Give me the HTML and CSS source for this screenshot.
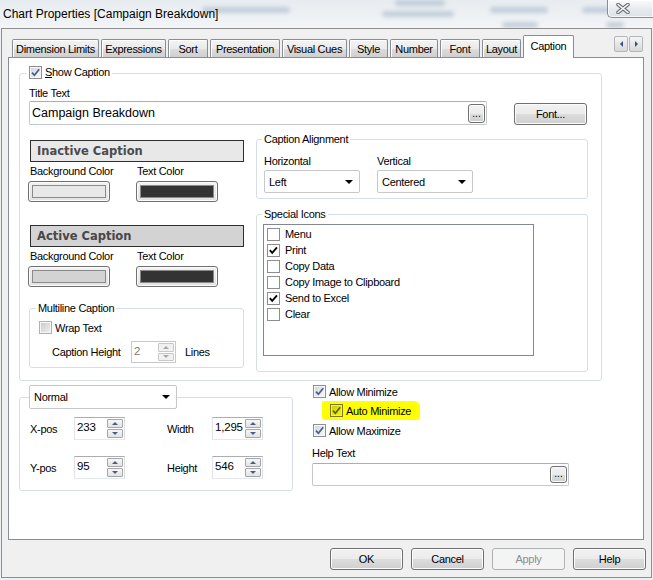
FILE: index.html
```html
<!DOCTYPE html>
<html lang="en">
<head>
<meta charset="utf-8">
<title>Chart Properties</title>
<link rel="stylesheet" href="styles.css">
</head>
<body>
<div class="window">
  <div class="titlebar">
    <div class="backdrop" aria-hidden="true">
      <i class="bl b1"></i>
      <i class="bl b2"></i>
      <i class="bl b3"></i>
      <i class="bl b4"></i>
      <i class="bl b5"></i>
      <i class="bl b6"></i>
      <i class="bl b7"></i>
    </div>
    <div class="title">Chart Properties [Campaign Breakdown]</div>
    <div class="close">
      <svg width="14" height="11" viewBox="0 0 14 11"><path d="M2 1.5L12 9.5M12 1.5L2 9.5" stroke="#6b6f75" stroke-width="3.6" stroke-linecap="round"/><path d="M2 1.5L12 9.5M12 1.5L2 9.5" stroke="#fbfbfb" stroke-width="1.6" stroke-linecap="round"/></svg>
    </div>
  </div>

  <div class="frame">
    <div class="tabs">
      <div class="tab"><span>Dimension Limits</span></div>
      <div class="tab"><span>Expressions</span></div>
      <div class="tab"><span>Sort</span></div>
      <div class="tab"><span>Presentation</span></div>
      <div class="tab"><span>Visual Cues</span></div>
      <div class="tab"><span>Style</span></div>
      <div class="tab"><span>Number</span></div>
      <div class="tab"><span>Font</span></div>
      <div class="tab"><span>Layout</span></div>
      <div class="tab active"><span>Caption</span></div>
      <div class="tabscroll">
        <div class="tsb"><i class="tri-left"></i></div>
        <div class="tsb"><i class="tri-right"></i></div>
      </div>
    </div>

    <div class="panel">
      <fieldset class="capgroup">
        <legend class="lg-check"><span class="lg-inner"><span class="cb"><svg width="11" height="11" viewBox="0 0 11 11"><path d="M2 5.6l2.4 2.7L9.2 2.2" fill="none" stroke="#4a5c8e" stroke-width="1.7"/></svg></span><span><u>S</u>how Caption</span></span></legend>
        <div class="cap-body">
          <div class="label title-label">Title Text</div>
          <div class="title-row">
            <div class="textbox big"><span>Campaign Breakdown</span><span class="dots">...</span></div>
            <div class="btn fontbtn">Font...</div>
          </div>

          <div class="columns">
            <div class="leftcol">
              <div class="capbar inactive">Inactive Caption</div>
              <div class="swatch-grid">
                <div class="label sl">Background Color</div>
                <div class="label sl2">Text Color</div>
                <div class="swatch"><div class="sw-fill light"></div></div>
                <div class="swatch"><div class="sw-fill dark"></div></div>
              </div>

              <div class="capbar active">Active Caption</div>
              <div class="swatch-grid">
                <div class="label sl">Background Color</div>
                <div class="label sl2">Text Color</div>
                <div class="swatch"><div class="sw-fill mid"></div></div>
                <div class="swatch"><div class="sw-fill dark"></div></div>
              </div>

              <fieldset class="mlgroup">
                <legend class="lg-text">Multiline Caption</legend>
                <div class="ml-body">
                  <div class="chk-line"><span class="cb disabled"></span><span>Wrap Text</span></div>
                  <div class="height-row">
                    <span class="hlabel">Caption Height</span>
                    <div class="spin disabled small"><span class="val">2</span><span class="spinbtns"><span class="sb up"></span><span class="sb down"></span></span></div>
                    <span class="lines">Lines</span>
                  </div>
                </div>
              </fieldset>
            </div>

            <div class="rightcol">
              <fieldset class="cagroup">
                <legend class="lg-text">Caption Alignment</legend>
                <div class="ca-body">
                  <div>
                    <div class="label">Horizontal</div>
                    <div class="select"><span>Left</span><i class="arrow"></i></div>
                  </div>
                  <div>
                    <div class="label">Vertical</div>
                    <div class="select"><span>Centered</span><i class="arrow"></i></div>
                  </div>
                </div>
              </fieldset>

              <fieldset class="sigroup">
                <legend class="lg-text">Special Icons</legend>
                <div class="si-body">
                  <div class="listbox">
                    <div class="item"><span class="cbf"></span><span>Menu</span></div>
                    <div class="item"><span class="cbf"><svg width="11" height="11" viewBox="0 0 11 11"><path d="M1.8 5.2l2.4 2.6L9 2.4" fill="none" stroke="#000" stroke-width="1.8"/></svg></span><span>Print</span></div>
                    <div class="item"><span class="cbf"></span><span>Copy Data</span></div>
                    <div class="item"><span class="cbf"></span><span>Copy Image to Clipboard</span></div>
                    <div class="item"><span class="cbf"><svg width="11" height="11" viewBox="0 0 11 11"><path d="M1.8 5.2l2.4 2.6L9 2.4" fill="none" stroke="#000" stroke-width="1.8"/></svg></span><span>Send to Excel</span></div>
                    <div class="item"><span class="cbf"></span><span>Clear</span></div>
                  </div>
                </div>
              </fieldset>
            </div>
          </div>
        </div>
      </fieldset>

      <div class="bottom">
        <fieldset class="posgroup">
          <legend class="lg-select"><div class="select wide"><span>Normal</span><i class="arrow"></i></div></legend>
          <div class="pos-body">
            <span>X-pos</span>
            <div class="spin"><span class="val">233</span><span class="spinbtns"><span class="sb up"></span><span class="sb down"></span></span></div>
            <span></span>
            <span>Width</span>
            <div class="spin"><span class="val">1,295</span><span class="spinbtns"><span class="sb up"></span><span class="sb down"></span></span></div>
            <span>Y-pos</span>
            <div class="spin"><span class="val">95</span><span class="spinbtns"><span class="sb up"></span><span class="sb down"></span></span></div>
            <span></span>
            <span>Height</span>
            <div class="spin"><span class="val">546</span><span class="spinbtns"><span class="sb up"></span><span class="sb down"></span></span></div>
          </div>
        </fieldset>

        <div class="optcol">
          <div class="chkrow"><span class="cb"><svg width="11" height="11" viewBox="0 0 11 11"><path d="M2 5.6l2.4 2.7L9.2 2.2" fill="none" stroke="#4a5c8e" stroke-width="1.7"/></svg></span><span>Allow Minimize</span></div>
          <div class="chkrow"><span class="hl"><span class="cb hlcb"><svg width="11" height="11" viewBox="0 0 11 11"><path d="M2 5.6l2.4 2.7L9.2 2.2" fill="none" stroke="#5b5b1c" stroke-width="1.7"/></svg></span><span>Auto Minimize</span></span></div>
          <div class="chkrow third"><span class="cb"><svg width="11" height="11" viewBox="0 0 11 11"><path d="M2 5.6l2.4 2.7L9.2 2.2" fill="none" stroke="#4a5c8e" stroke-width="1.7"/></svg></span><span>Allow Maximize</span></div>
          <div class="label help-label">Help Text</div>
          <div class="textbox help"><span></span><span class="dots">...</span></div>
        </div>
      </div>
    </div>

    <div class="buttons">
      <div class="btn">OK</div>
      <div class="btn">Cancel</div>
      <div class="btn disabled">Apply</div>
      <div class="btn">Help</div>
    </div>
  </div>
</div>
</body>
</html>
```

FILE: styles.css
```css
* { box-sizing: border-box; }
html, body { margin: 0; padding: 0; }
body {
  width: 653px;
  height: 580px;
  overflow: hidden;
  background: #eef1f4;
  font-family: "Liberation Sans", Arial, sans-serif;
  font-size: 11px;
  letter-spacing: -0.3px;
  color: #000;
}
.window { width: 653px; height: 580px; }

/* ---------- title bar ---------- */
.titlebar {
  position: relative;
  height: 28px;
  display: flex;
  align-items: flex-start;
  background: linear-gradient(#e7ecf0, #f3f5f7);
}
.backdrop { position: absolute; inset: 0; overflow: hidden; }
.bl {
  position: absolute;
  height: 6px;
  border-radius: 3px;
  background: #9fb1c6;
  filter: blur(2.2px);
  opacity: 0.55;
}
.b1 { left: 202px; top: 7px; width: 88px; }
.b2 { left: 395px; top: 0px; width: 50px; }
.b3 { left: 382px; top: 11px; width: 72px; }
.b4 { left: 490px; top: 7px; width: 58px; }
.b5 { left: 582px; top: 7px; width: 40px; }
.b6 { left: 502px; top: 22px; width: 36px; }
.b7 { left: 606px; top: 22px; width: 18px; }
.title {
  position: relative;
  margin: 7px 0 0 3px;
  font-size: 12px;
  letter-spacing: 0;
  line-height: 14px;
  color: #000;
  white-space: nowrap;
}
.close {
  position: relative;
  margin-left: auto;
  width: 46px;
  height: 18px;
  border: 1px solid #858d98;
  border-top: none;
  border-right: none;
  border-radius: 0 0 0 5px;
  background: linear-gradient(#fafbfc, #e6eaef 55%, #dde2e8);
  box-shadow: inset 0 0 0 1px rgba(255,255,255,0.7);
  display: flex;
  align-items: center;
  padding-left: 8px;
}

/* ---------- frame ---------- */
.frame {
  margin-left: 1px;
  width: 651px;
  height: 550px;
  border: 1px solid #8d8e8f;
  background: #f0f0f0;
}

/* ---------- tabs ---------- */
.tabs {
  display: flex;
  align-items: flex-end;
  height: 22px;
  margin: 6px 0 0 10px;
}
.tab {
  height: 18px;
  margin-right: 2px;
  border: 1px solid #898c95;
  border-bottom: none;
  border-radius: 2px 2px 0 0;
  background: linear-gradient(#f3f3f3, #ebebeb 50%, #dddddd 51%, #cfcfcf);
  box-shadow: inset 1px 1px 0 #fff;
  display: flex;
  align-items: center;
  justify-content: center;
  white-space: nowrap;
}
.tab:nth-child(1) { width: 87px; }
.tab:nth-child(2) { width: 65px; }
.tab:nth-child(3) { width: 40px; }
.tab:nth-child(4) { width: 70px; }
.tab:nth-child(5) { width: 65px; }
.tab:nth-child(6) { width: 39px; }
.tab:nth-child(7) { width: 48px; }
.tab:nth-child(8) { width: 40px; }
.tab:nth-child(9) { width: 39px; }
.tab.active {
  width: 51px;
  height: 23px;
  margin-bottom: -1px;
  background: #fff;
  box-shadow: none;
  position: relative;
  z-index: 1;
  align-items: flex-start;
  padding-top: 4px;
}
.tabscroll {
  align-self: flex-start;
  margin: 1px 0 0 auto;
  margin-right: 8px;
  display: flex;
  gap: 1px;
}
.tsb {
  width: 14px;
  height: 16px;
  border: 1px solid #b3b6ba;
  border-radius: 2px;
  background: linear-gradient(#f6f6f6, #e6e6e6 50%, #d9d9d9);
  display: flex;
  align-items: center;
  justify-content: center;
}
.tri-left { width: 0; height: 0; border-top: 3px solid transparent; border-bottom: 3px solid transparent; border-right: 3px solid #3c4f84; }
.tri-right { width: 0; height: 0; border-top: 3px solid transparent; border-bottom: 3px solid transparent; border-left: 3px solid #3c4f84; }

/* ---------- panel ---------- */
.panel {
  margin-left: 6px;
  width: 636px;
  height: 483px;
  border: 1px solid #898c95;
  background: #fff;
  position: relative;
}

fieldset {
  margin: 0;
  padding: 0;
  border: 1px solid #d5dfe5;
  border-radius: 3px;
  min-width: 0;
}
legend { padding: 0 2px; line-height: 13px; }
.lg-inner { display: inline-flex; align-items: center; gap: 3px; }

.label { line-height: 13px; white-space: nowrap; }

.capgroup { margin: 8px 0 0 10px; width: 583px; }
.lg-check { margin-left: 7px; }
.cap-body { padding: 0 9px 8px 9px; }
.title-label { margin-top: 6px; }
.title-row { display: flex; align-items: flex-start; margin-top: 1px; }

.textbox {
  height: 24px;
  border: 1px solid #c4c7cc;
  border-top-color: #abadb3;
  border-radius: 2px;
  background: #fff;
  display: flex;
  align-items: center;
  justify-content: space-between;
  padding: 0 1px 0 2px;
}
.textbox.big { width: 458px; font-size: 12.5px; letter-spacing: 0; }
.dots {
  width: 17px;
  height: 19px;
  border: 1px solid #707070;
  border-radius: 3px;
  background: linear-gradient(#f2f2f2, #ebebeb 50%, #dddddd 51%, #cfcfcf);
  box-shadow: inset 0 0 0 1px #fbfbfb;
  font-size: 10px;
  letter-spacing: 0;
  line-height: 10px;
  display: flex;
  align-items: flex-end;
  justify-content: center;
  padding-bottom: 3px;
}

.btn {
  width: 73px;
  height: 22px;
  border: 1px solid #707070;
  border-radius: 3px;
  background: linear-gradient(#f2f2f2, #ebebeb 50%, #dddddd 51%, #cfcfcf);
  box-shadow: inset 0 0 0 1px #fcfcfc;
  display: flex;
  align-items: center;
  justify-content: center;
  white-space: nowrap;
}
.btn.disabled {
  border-color: #adb2b5;
  background: #f4f4f4;
  box-shadow: none;
  color: #8d8d8d;
}
.fontbtn { margin: 2px 0 0 27px; }

.columns { display: flex; align-items: flex-start; margin-top: 8px; }
.leftcol { width: 215px; padding-top: 7px; }
.rightcol { width: 332px; margin-left: 12px; }

.capbar {
  margin-left: 1px;
  width: 214px;
  height: 22px;
  border: 1px solid #2e2e2e;
  padding-left: 6px;
  display: flex;
  align-items: center;
  font-family: "DejaVu Sans", sans-serif;
  font-weight: bold;
  font-size: 11.5px;
  letter-spacing: 0;
  color: #4b4b4b;
}
.capbar.inactive { background: #e8e8e8; }
.capbar.active { background: #d3d3d3; margin-top: 23px; color: #474747; }

.swatch-grid {
  display: grid;
  grid-template-columns: 108px 82px;
  row-gap: 3px;
  margin: 3px 0 0 -1px;
}
.sl { padding-left: 2px; }
.sl2 { padding-left: 1px; }
.swatch {
  width: 82px;
  height: 21px;
  border: 1px solid #707070;
  border-radius: 3px;
  background: linear-gradient(#f2f2f2, #e2e2e2);
  box-shadow: inset 0 0 0 1px #fbfbfb;
  padding: 3px 3px;
}
.sw-fill { width: 100%; height: 100%; border: 1px solid #8a8a8a; }
.sw-fill.light { background: #e8e8e8; }
.sw-fill.mid { background: #d3d3d3; }
.sw-fill.dark { background: #333333; }

.mlgroup { margin-top: 15px; width: 215px; }
.lg-text { margin-left: 6px; white-space: nowrap; }
.ml-body { padding: 6px 0 4px 9px; }
.chk-line { display: flex; align-items: center; gap: 3px; height: 13px; }
.height-row { display: flex; align-items: center; margin-top: 7px; }
.hlabel { margin-left: 13px; width: 79px; }
.lines { margin-left: 9px; }

/* checkboxes */
.cb {
  width: 13px;
  height: 13px;
  flex: none;
  border: 1px solid #8e8f8f;
  background: linear-gradient(135deg, #cfd3d8, #f4f4f5 80%);
  box-shadow: inset 0 0 0 1px #f6f6f6;
  display: flex;
  align-items: center;
  justify-content: center;
}
.cb.disabled {
  border-color: #b1b1b1;
  background: linear-gradient(135deg, #c7c7c7, #ececec 85%);
}
.cb.hlcb {
  border-color: #7a7a32;
  background: linear-gradient(135deg, #c9c900, #f2f200 80%);
  box-shadow: inset 0 0 0 1px #f0f060;
}
.cbf {
  width: 13px;
  height: 13px;
  flex: none;
  border: 1px solid #8d8d8d;
  background: #fff;
  display: flex;
  align-items: center;
  justify-content: center;
}

/* spin */
.spin {
  width: 51px;
  height: 23px;
  border: 1px solid #abadb3;
  border-color: #abadb3 #dbdfe6 #e3e9ef #e2e3ea;
  background: #fff;
  display: flex;
  padding: 1px;
  font-size: 11.5px;
  letter-spacing: -0.2px;
}
.spin.small { width: 45px; height: 22px; }
.spin .val { flex: 1; padding: 1px 0 0 1px; line-height: 14px; }
.spin.disabled { border-color: #c9c9c9; }
.spin.disabled .val { color: #7a7a7a; }
.spinbtns { width: 16px; display: flex; flex-direction: column; gap: 1px; }
.sb {
  flex: 1;
  border: 1px solid #a4a6aa;
  border-radius: 1px;
  background: linear-gradient(#f7f7f7, #e3e3e3);
  display: flex;
  align-items: center;
  justify-content: center;
}
.sb.up::after { content: ""; border-left: 3px solid transparent; border-right: 3px solid transparent; border-bottom: 3px solid #4a5c88; }
.sb.down::after { content: ""; border-left: 3px solid transparent; border-right: 3px solid transparent; border-top: 3px solid #4a5c88; }
.spin.disabled .sb { border-color: #c8c8c8; background: #f1f1f1; }
.spin.disabled .sb.up::after { border-bottom-color: #a9a9a9; }
.spin.disabled .sb.down::after { border-top-color: #a9a9a9; }

/* selects */
.select {
  margin-top: 2px;
  height: 23px;
  width: 96px;
  border: 1px solid #c6c8cc;
  border-radius: 2px;
  background: #fff;
  display: flex;
  align-items: center;
  padding: 0 6px 0 4px;
}
.select .arrow {
  margin-left: auto;
  width: 0;
  height: 0;
  border-left: 4px solid transparent;
  border-right: 4px solid transparent;
  border-top: 4px solid #000;
}
.select.wide { width: 148px; height: 24px; margin-top: 0; }

.cagroup { width: 332px; }
.cagroup legend, .sigroup legend { margin-left: 5px; }
.ca-body {
  display: grid;
  grid-template-columns: 96px 96px;
  column-gap: 17px;
  padding: 9px 0 5px 7px;
}
.sigroup { width: 332px; margin-top: 9px; }
.si-body { padding: 3px 0 15px 6px; }
.listbox {
  width: 271px;
  height: 132px;
  border: 1px solid #828790;
  padding: 1px 0 0 3px;
}
.item { height: 16px; display: flex; align-items: center; gap: 5px; }

/* bottom */
.bottom { display: flex; align-items: flex-start; }
.posgroup { margin: 4px 0 0 10px; width: 274px; }
.lg-select { padding: 0; margin-left: 9px; }
.pos-body {
  display: grid;
  grid-template-columns: 44px 51px 42px 45px 51px;
  grid-template-rows: 23px 23px;
  row-gap: 16px;
  align-items: center;
  padding: 8px 0 11px 10px;
}

.optcol { margin: 1px 0 0 19px; width: 260px; }
.chkrow { height: 19px; display: flex; align-items: center; gap: 3px; }
.chkrow.third { margin-top: 1px; }
.chkrow > .cb { margin-left: 1px; }
.hl {
  display: inline-flex;
  align-items: center;
  gap: 3px;
  height: 19px;
  width: 98px;
  margin-left: 10px;
  padding-left: 8px;
  background: #ffff00;
  border-radius: 2px 6px 4px 3px;
}
.help-label { margin-top: 7px; }
.textbox.help { width: 257px; height: 23px; margin-top: 3px; }
.textbox.help .dots { height: 17px; }

/* dialog buttons */
.buttons {
  display: flex;
  justify-content: flex-end;
  gap: 8px;
  margin: 8px 5px 0 0;
}
```
